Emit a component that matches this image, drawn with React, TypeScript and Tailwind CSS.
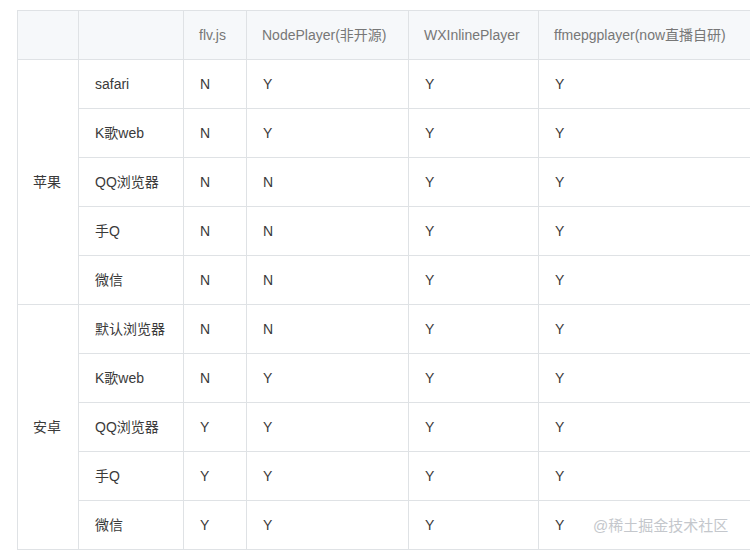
const headers = ["", "", "flv.js", "NodePlayer(非开源)", "WXInlinePlayer", "ffmepgplayer(now直播自研)"];

interface Group {
  platform: string;
  rows: string[][];
}

const groups: Group[] = [
  {
    platform: "苹果",
    rows: [
      ["safari", "N", "Y", "Y", "Y"],
      ["K歌web", "N", "Y", "Y", "Y"],
      ["QQ浏览器", "N", "N", "Y", "Y"],
      ["手Q", "N", "N", "Y", "Y"],
      ["微信", "N", "N", "Y", "Y"],
    ],
  },
  {
    platform: "安卓",
    rows: [
      ["默认浏览器", "N", "N", "Y", "Y"],
      ["K歌web", "N", "Y", "Y", "Y"],
      ["QQ浏览器", "Y", "Y", "Y", "Y"],
      ["手Q", "Y", "Y", "Y", "Y"],
      ["微信", "Y", "Y", "Y", "Y"],
    ],
  },
];

const colWidths = ["w-[61px]", "w-[105px]", "w-[63px]", "w-[162px]", "w-[130px]", "w-[240px]"];

export default function App() {
  return (
    <div
      className="relative w-[750px] h-[555px] overflow-hidden bg-white pl-[17px] pt-[10px]"
      style={{ fontFamily: '"Liberation Sans", "Noto Sans CJK SC", sans-serif' }}
    >
      <table className="border-collapse table-fixed w-[761px] text-[14px] text-[#3a3a3a]">
        <colgroup>
          {colWidths.map((w, i) => (
            <col key={i} className={w} />
          ))}
        </colgroup>
        <thead>
          <tr className="bg-[#f6f8fa]">
            {headers.map((h, i) => (
              <th
                key={i}
                className="h-[49px] border border-[#dfe2e5] px-[15px] text-left font-normal text-[#777] whitespace-nowrap"
              >
                {h}
              </th>
            ))}
          </tr>
        </thead>
        <tbody>
          {groups.map((g) =>
            g.rows.map((row, ri) => (
              <tr key={g.platform + ri}>
                {ri === 0 && (
                  <td
                    rowSpan={g.rows.length}
                    className="border border-[#dfe2e5] px-[15px] text-left"
                  >
                    {g.platform}
                  </td>
                )}
                {row.map((cell, ci) => (
                  <td
                    key={ci}
                    className="h-[49px] border border-[#dfe2e5] px-[16px] text-left whitespace-nowrap"
                  >
                    {cell}
                  </td>
                ))}
              </tr>
            ))
          )}
        </tbody>
      </table>
      <div className="absolute left-[593px] top-[515px] text-[15px] text-[#c4c7cc]">
        @稀土掘金技术社区
      </div>
    </div>
  );
}
